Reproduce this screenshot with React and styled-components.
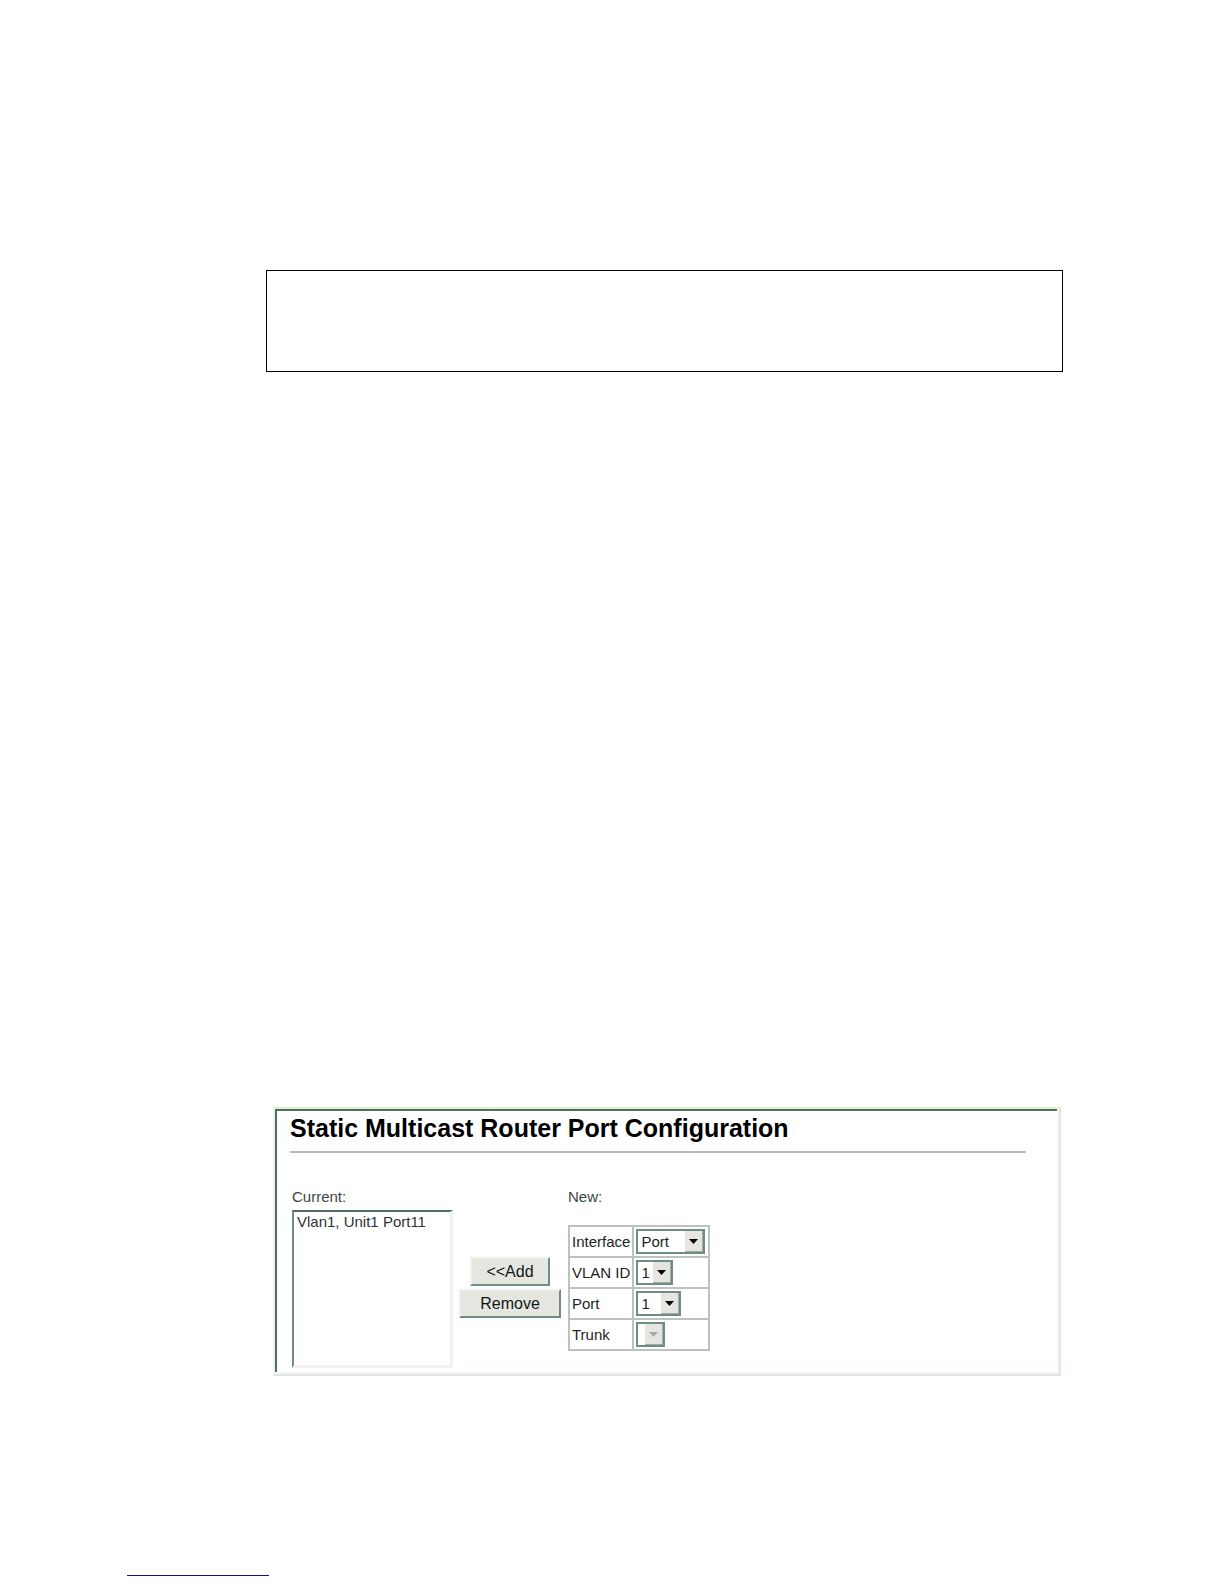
import styled, { createGlobalStyle } from "styled-components";
import { useState } from "react";

const interfaceRows = [
  { id: "interface", label: "Interface", width: 69, options: ["Port", "Trunk"] },
  { id: "vlan", label: "VLAN ID", width: 37, options: ["1"] },
  { id: "port", label: "Port", width: 45, options: ["1", "2", "3", "4"] },
  { id: "trunk", label: "Trunk", width: 29, options: [], disabled: true },
]

export default function App() {
  const [members, setMembers] = useState(["Vlan1, Unit1 Port11"])
  const [selected, setSelected] = useState([])
  const [form, setForm] = useState({ interface: "Port", vlan: "1", port: "1" })

  function handleAdd() {
    const name = `Vlan${form.vlan}, Unit1 Port${form.port}`
    if (members.includes(name)) return;
    setMembers([...members, name])
  }

  function handleRemove() {
    setMembers(members.filter((m) => !selected.includes(m)))
    setSelected([])
  }

  return (
    <>
      <GlobalStyle />
      <Page>
        <Content>
          <NoteBox />
          <Panel>
            <Title>Static Multicast Router Port Configuration</Title>
            <Divider />
            <Columns>
              <CurrentColumn>
                <Label htmlFor="current">Current:</Label>
                <MemberList
                  id="current"
                  multiple
                  value={selected}
                  onChange={(e) => setSelected([...e.target.selectedOptions].map((o) => o.value))}
                >
                  {members.map((m) => <option key={m} value={m}>{m}</option>)}
                </MemberList>
              </CurrentColumn>
              <Actions>
                <Button type="button" $width={80} onClick={handleAdd}>&lt;&lt;Add</Button>
                <Button type="button" $width={102} onClick={handleRemove}>Remove</Button>
              </Actions>
              <NewColumn>
                <Label as="span">New:</Label>
                <FormTable>
                  <tbody>
                    {interfaceRows.map((row) => (
                      <tr key={row.id}>
                        <NameCell scope="row"><label htmlFor={row.id}>{row.label}</label></NameCell>
                        <FieldCell>
                          <SelectWrap $width={row.width}>
                            <Select
                              id={row.id}
                              disabled={row.disabled}
                              value={form[row.id]}
                              onChange={(e) => setForm({ ...form, [row.id]: e.target.value })}
                            >
                              {row.options.map((o) => <option key={o}>{o}</option>)}
                            </Select>
                            <Arrow $disabled={row.disabled}>
                              <svg width="9" height="5" viewBox="0 0 9 5"><path d="M0 0H9L4.5 5Z" fill="currentColor" /></svg>
                            </Arrow>
                          </SelectWrap>
                        </FieldCell>
                      </tr>
                    ))}
                  </tbody>
                </FormTable>
              </NewColumn>
            </Columns>
          </Panel>
        </Content>
        <FooterRule />
      </Page>
    </>
  )
}

const GlobalStyle = createGlobalStyle`
  * {
    box-sizing: border-box;
  }
  body {
    margin: 0;
    background: #ffffff;
    color: #1c2422;
    font-family: "Liberation Sans", Arial, sans-serif;
    font-size: 15px;
    line-height: 18px;
  }
`

const Page = styled.div`
  display: flex;
  flex-direction: column;
  min-height: 100vh;
`

const Content = styled.main`
  flex: 1;
  padding: 270px 161px 0 266px;
`

const NoteBox = styled.div`
  height: 102px;
  border: 1px solid #000000;
`

const Panel = styled.section`
  margin: 735px 2px 0 7px;
  padding: 5px 33px 6px 12px;
  border: 2px solid;
  border-color: #e2f2c8 #e2e6e2 #e2e6e2 #eef1ee;
  box-shadow: inset -2px -2px 0 #f3f5f3, inset 2px 2px 0 #4f6e62;
`

const Title = styled.h1`
  margin: 0;
  padding: 0 3px 2px;
  color: #000000;
  font-size: 25px;
  line-height: 28px;
  font-weight: 700;
`

const Divider = styled.hr`
  margin: 7px 0 0 3px;
  border: 0;
  border-top: 2px solid #b4bab7;
`

const Columns = styled.div`
  display: flex;
  align-items: flex-start;
  padding: 35px 0 0 5px;
`

const CurrentColumn = styled.div`
  display: flex;
  flex-direction: column;
  gap: 4px;
`

const Label = styled.label`
  color: #3c4643;
`

const MemberList = styled.select`
  width: 161px;
  height: 158px;
  margin: 0;
  padding: 1px 0;
  overflow: hidden;
  appearance: none;
  background: #ffffff;
  color: #2c3432;
  border-style: solid;
  border-width: 2px 3px 3px 2px;
  border-color: #4f6e62 #f0f2f0 #f0f2f0 #6f8d82;
  border-radius: 0;
  outline: none;
  font: inherit;
  option {
    min-height: 18px;
    padding: 0 3px;
  }
`

const Actions = styled.div`
  display: flex;
  flex-direction: column;
  align-items: center;
  gap: 3px;
  padding: 69px 7px 0 6px;
`

const Button = styled.button`
  width: ${({ $width }) => $width}px;
  height: 29px;
  padding: 0;
  background: #e4e6df;
  color: #111816;
  border: 2px solid;
  border-color: #eef0ea #6f8d82 #6f8d82 #eef0ea;
  font: inherit;
  font-size: 16px;
`

const NewColumn = styled.div`
  display: flex;
  flex-direction: column;
  align-items: flex-start;
  gap: 19px;
`

const FormTable = styled.table`
  border: 1px solid #bcc2bf;
  border-spacing: 0;
`

const NameCell = styled.th`
  width: 64px;
  height: 31px;
  padding: 0 2px;
  border: 1px solid #bcc2bf;
  font-weight: 400;
  text-align: left;
`

const FieldCell = styled.td`
  width: 76px;
  padding: 0 2px;
  border: 1px solid #bcc2bf;
`

const SelectWrap = styled.span`
  position: relative;
  display: block;
  width: ${({ $width }) => $width}px;
  height: 25px;
`

const Select = styled.select`
  width: 100%;
  height: 100%;
  padding: 0 0 0 3px;
  appearance: none;
  background: #ffffff;
  color: #1c2422;
  border: 2px solid #6f8d82;
  border-radius: 0;
  font: inherit;
  opacity: 1;
`

const Arrow = styled.span`
  position: absolute;
  top: 2px;
  right: 2px;
  bottom: 2px;
  width: 18px;
  display: flex;
  align-items: center;
  justify-content: center;
  background: #e4e6df;
  color: ${({ $disabled }) => ($disabled ? "#a3aaa6" : "#000000")};
  border-right: 1px solid #a3aaa6;
  border-bottom: 1px solid #a3aaa6;
  pointer-events: none;
`

const FooterRule = styled.hr`
  width: 142px;
  margin: 0 0 8px 127px;
  border: 0;
  border-top: 1px solid #10108a;
`
